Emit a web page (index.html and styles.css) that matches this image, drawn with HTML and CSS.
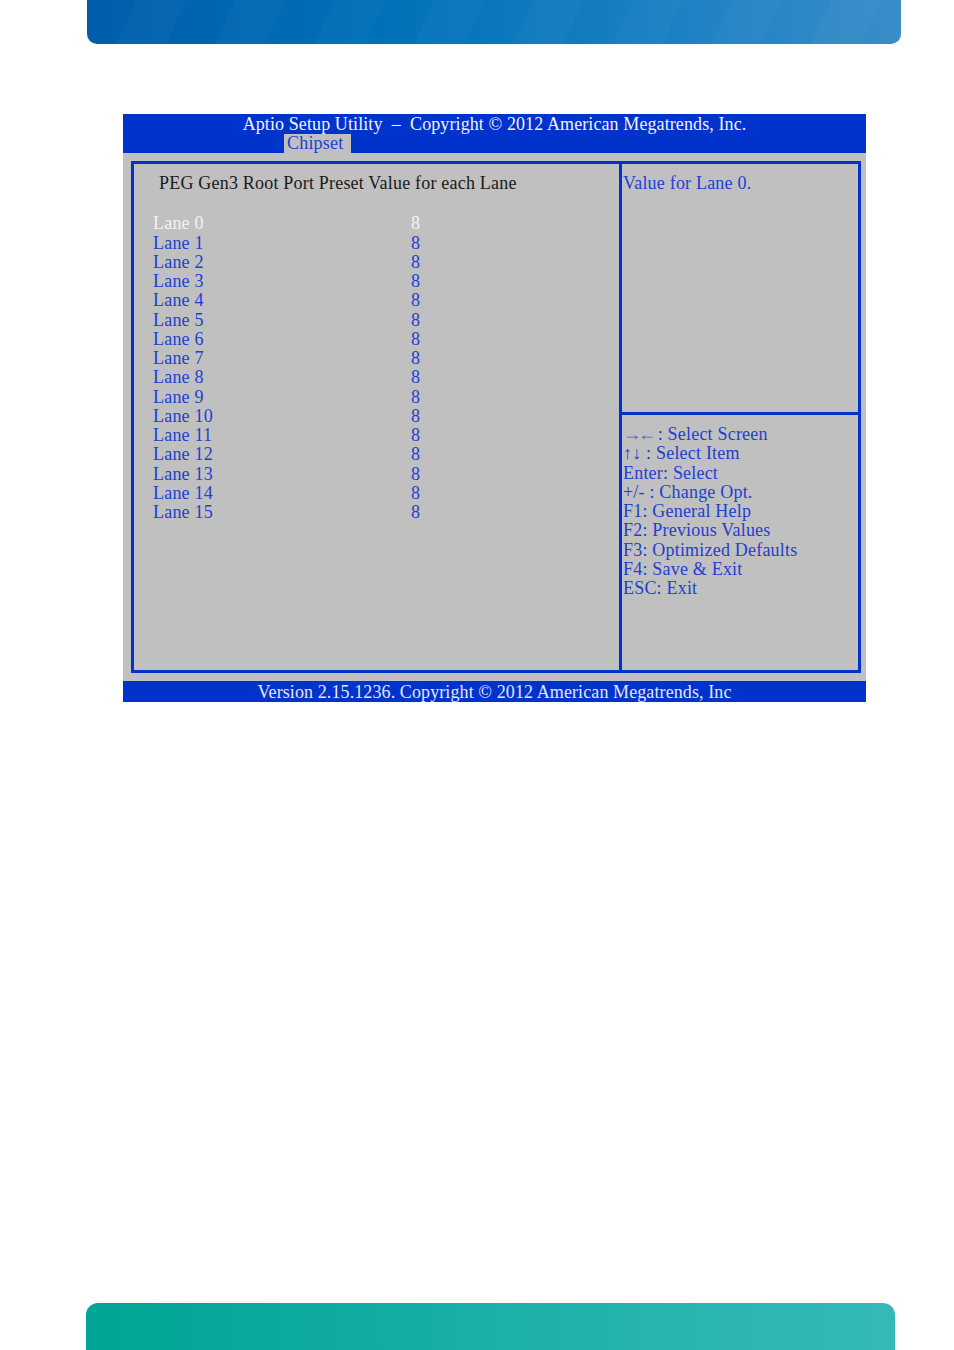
FILE: index.html
```html
<!DOCTYPE html>
<html>
<head>
<meta charset="utf-8">
<link rel="stylesheet" href="styles.css">
</head>
<body>
<div class="topbar"></div>
<div class="bios">
  <div class="bios-head">
    <div class="head-line">Aptio Setup Utility &nbsp;–&nbsp; Copyright © 2012 American Megatrends, Inc.</div>
    <div class="tabs"><span class="tab">Chipset</span></div>
  </div>
  <div class="bios-body">
    <div class="frame">
      <div class="left">
        <div class="title">PEG Gen3 Root Port Preset Value for each Lane</div>
        <div class="lanes">
          <div class="lane sel"><span class="lbl">Lane 0</span><span class="val">8</span></div>
          <div class="lane"><span class="lbl">Lane 1</span><span class="val">8</span></div>
          <div class="lane"><span class="lbl">Lane 2</span><span class="val">8</span></div>
          <div class="lane"><span class="lbl">Lane 3</span><span class="val">8</span></div>
          <div class="lane"><span class="lbl">Lane 4</span><span class="val">8</span></div>
          <div class="lane"><span class="lbl">Lane 5</span><span class="val">8</span></div>
          <div class="lane"><span class="lbl">Lane 6</span><span class="val">8</span></div>
          <div class="lane"><span class="lbl">Lane 7</span><span class="val">8</span></div>
          <div class="lane"><span class="lbl">Lane 8</span><span class="val">8</span></div>
          <div class="lane"><span class="lbl">Lane 9</span><span class="val">8</span></div>
          <div class="lane"><span class="lbl">Lane 10</span><span class="val">8</span></div>
          <div class="lane"><span class="lbl">Lane 11</span><span class="val">8</span></div>
          <div class="lane"><span class="lbl">Lane 12</span><span class="val">8</span></div>
          <div class="lane"><span class="lbl">Lane 13</span><span class="val">8</span></div>
          <div class="lane"><span class="lbl">Lane 14</span><span class="val">8</span></div>
          <div class="lane"><span class="lbl">Lane 15</span><span class="val">8</span></div>
        </div>
      </div>
      <div class="right">
        <div class="help">Value for Lane 0.</div>
        <div class="keys">
          <div><span class="arr-h">→←</span> : Select Screen</div>
          <div>↑↓ : Select Item</div>
          <div>Enter: Select</div>
          <div>+/- : Change Opt.</div>
          <div>F1: General Help</div>
          <div>F2: Previous Values</div>
          <div>F3: Optimized Defaults</div>
          <div>F4: Save &amp; Exit</div>
          <div>ESC: Exit</div>
        </div>
      </div>
    </div>
  </div>
  <div class="bios-foot">Version 2.15.1236. Copyright © 2012 American Megatrends, Inc</div>
</div>
<div class="spacer"></div>
<div class="bottombar"></div>
</body>
</html>
```
FILE: styles.css
```css
html, body {
  margin: 0;
  padding: 0;
  background: #ffffff;
}
body {
  width: 954px;
  height: 1350px;
  overflow: hidden;
  display: flex;
  flex-direction: column;
  font-family: "Liberation Serif", "Times New Roman", serif;
}
.topbar {
  margin-left: 87px;
  width: 814px;
  height: 44px;
  border-radius: 0 0 10px 10px;
  background:
    repeating-linear-gradient(115deg, rgba(255,255,255,0.00) 0px, rgba(255,255,255,0.00) 45px, rgba(255,255,255,0.022) 45px, rgba(255,255,255,0.022) 90px),
    linear-gradient(to right, #005dac 0%, #0070b8 35%, #1980c3 70%, #3a8dc8 100%);
  flex: none;
}
.bios {
  margin-top: 70px;
  margin-left: 123px;
  width: 743px;
  flex: none;
  font-size: 18px;
  letter-spacing: 0.2px;
}
.bios-head {
  background: #0033cc;
  height: 39px;
  display: flex;
  flex-direction: column;
}
.head-line {
  height: 20px;
  line-height: 20px;
  text-align: center;
  color: #f2f2f2;
  white-space: nowrap;
  letter-spacing: 0.1px;
}
.tabs {
  display: flex;
  height: 19px;
}
.tab {
  margin-left: 161px;
  width: 67px;
  height: 19px;
  line-height: 19px;
  background: #c0c0c0;
  color: #1e3fd0;
  padding-left: 3px;
  box-sizing: border-box;
}
.bios-body {
  background: #c0c0c0;
  padding: 8px 5px 8px 8px;
}
.frame {
  border: 3px solid #0033cc;
  height: 506px;
  display: flex;
}
.left {
  width: 488px;
  border-right: 3px solid #0033cc;
  padding: 10px 0 0 19px;
  box-sizing: border-box;
  line-height: 19.25px;
}
.title {
  color: #1a1a1a;
  padding-left: 6px;
  margin-bottom: 21px;
}
.lane {
  display: flex;
  color: #1e3fd0;
}
.lane.sel {
  color: #f4f4f4;
}
.lbl {
  width: 258px;
}
.right {
  flex: 1;
  display: flex;
  flex-direction: column;
  line-height: 19.25px;
  color: #1e3fd0;
}
.help {
  height: 251px;
  padding: 10px 0 0 1px;
  box-sizing: border-box;
  border-bottom: 3px solid #0033cc;
}
.keys {
  padding: 10px 0 0 1px;
}
.arr-h {
  color: #4a64d0;
  letter-spacing: -3px;
}
.bios-foot {
  background: #0033cc;
  height: 21px;
  line-height: 22px;
  text-align: center;
  color: #e4e6f2;
  letter-spacing: 0.1px;
  white-space: nowrap;
}
.spacer {
  flex: 1;
}
.bottombar {
  margin-left: 86px;
  width: 809px;
  height: 47px;
  flex: none;
  border-radius: 12px 12px 0 0;
  background: linear-gradient(to right, #00a595 0%, #14ada5 40%, #28b5b0 75%, #35b9b6 100%);
}
```
